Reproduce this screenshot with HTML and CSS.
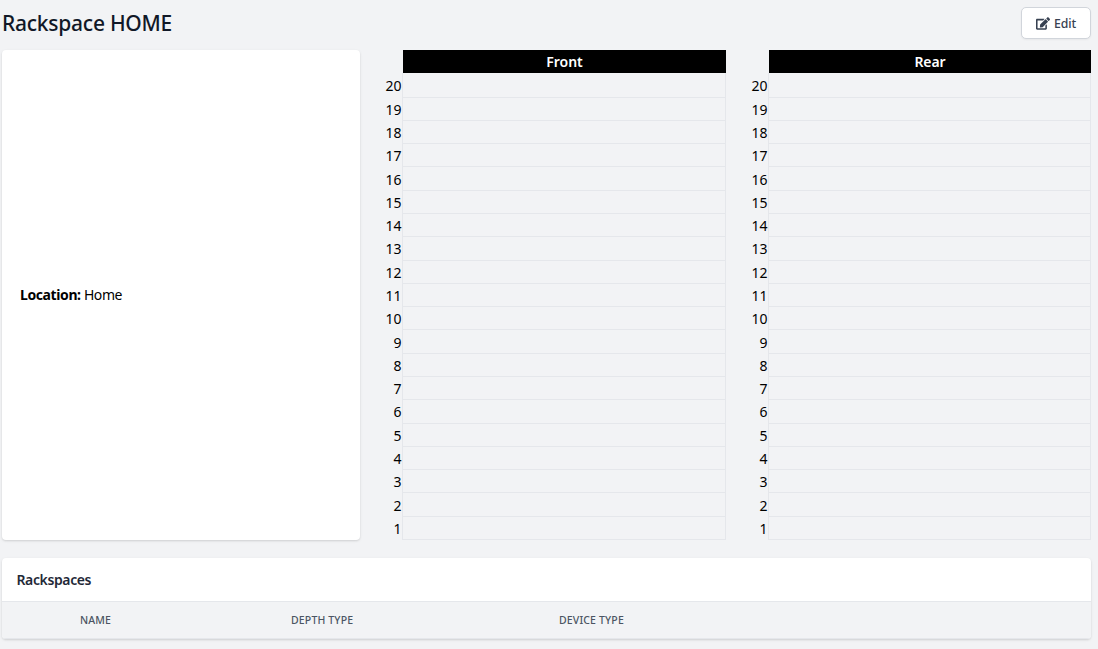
FILE: index.html
```
<!DOCTYPE html>
<html lang="en">
<head>
<meta charset="utf-8">
<title>Rackspace HOME</title>
<link rel="stylesheet" href="styles.css">
</head>
<body>
<header class="page-header">
  <h1 class="title">Rackspace HOME</h1>
  <button class="edit" type="button">
    <svg class="edit-icon" viewBox="0 0 576 512" aria-hidden="true"><path fill="currentColor" d="M402.6 83.2l90.2 90.2c3.800 3.800 3.800 10 0 13.800L274.400 405.600l-92.800 10.300c-12.400 1.400-22.900-9.100-21.500-21.500l10.300-92.800L388.800 83.200c3.800-3.800 10-3.800 13.800 0zm162-22.900l-48.800-48.800c-15.200-15.200-39.900-15.200-55.200 0l-35.400 35.400c-3.800 3.800-3.800 10 0 13.800l90.2 90.2c3.800 3.800 10 3.800 13.800 0l35.400-35.400c15.200-15.300 15.200-40 0-55.200zM384 346.200V448H64V128h229.800c3.200 0 6.200-1.300 8.500-3.500l40-40c7.600-7.600 2.200-20.500-8.500-20.500H48C21.500 64 0 85.500 0 112v352c0 26.500 21.500 48 48 48h352c26.500 0 48-21.500 48-48V306.200c0-10.700-12.900-16-20.500-8.500l-40 40c-2.200 2.300-3.500 5.300-3.500 8.500z"/></svg>
    <span>Edit</span>
  </button>
</header>
<main>
  <div class="overview">
    <section class="card info"><p><strong>Location:</strong> Home</p></section>
    <section class="rack front"><h2>Front</h2><ol class="units" reversed></ol></section>
    <section class="rack rear"><h2>Rear</h2><ol class="units" reversed></ol></section>
  </div>
  <section class="card listing">
    <h3>Rackspaces</h3>
    <div class="columns"><span>NAME</span><span>DEPTH TYPE</span><span>DEVICE TYPE</span></div>
  </section>
</main>
<script src="rack.js"></script>
</body>
</html>
```
FILE: styles.css
```
* { box-sizing: border-box; margin: 0; padding: 0; }
body {
  width: 1098px;
  height: 649px;
  overflow: hidden;
  padding: 7px 7px 0 2px;
  background: #f2f3f5;
  color: #000;
  font: 14px/21px "Noto Sans", sans-serif;
}
.page-header { display: flex; justify-content: space-between; height: 43px; }
.title { color: #111827; font-size: 21px; line-height: 33px; font-weight: 500; letter-spacing: -.25px; }
.edit {
  display: flex; align-items: center; gap: 4px;
  width: 70px; height: 32px; padding: 1px 0 0 14px;
  border: 1px solid #d1d5db; border-radius: 5px;
  background: #fff; color: #374151;
  box-shadow: 0 1px 2px rgba(0, 0, 0, .05);
  font: 500 12.250px/18px "Noto Sans", sans-serif;
  letter-spacing: -.1px;
}
.edit-icon { width: 14px; height: 13px; }
.overview { display: grid; grid-template-columns: 358px 366px 365px; height: 490px; }
.card {
  background: #fff; border-radius: 4px;
  box-shadow: 0 1px 3px rgba(0, 0, 0, .1), 0 1px 2px rgba(0, 0, 0, .06);
}
.info { display: flex; align-items: center; padding: 0 0 2px 18px; letter-spacing: -.4px; }
.rack { display: flex; flex-direction: column; }
.rack h2 {
  margin-left: 43px; height: 23px;
  background: #000; color: #fff;
  text-align: center; font-size: 14px; line-height: 23px; font-weight: 600;
}
.rear h2 { letter-spacing: -.1px; }
.units { list-style: none; flex: 1; display: grid; grid-template-rows: 24.6px repeat(19, 23.285px); }
.units li { display: grid; grid-template-columns: 42px 1fr; text-align: right; }
.units b { font-weight: 400; align-self: center; padding-right: .5px; }
.units i { border: solid #e5e7eb; border-width: 0 1px 1px; }
.listing { margin-top: 18px; height: 81px; overflow: hidden; }
.listing h3 { height: 43px; padding-left: 14.500px; font-size: 14px; line-height: 43px; font-weight: 600; color: #1f2937; letter-spacing: -.38px; }
.columns {
  display: grid; grid-template-columns: 211px 268px 1fr;
  height: 38px; padding-left: 78px;
  border: solid #e5e7eb; border-width: 1px 0;
  background: #f2f3f5; color: #4b5563;
  font-size: 10.500px; line-height: 36px; font-weight: 500; letter-spacing: .15px;
}
```
FILE: rack.js
```
document.querySelectorAll(".units").forEach((list) => {
  for (let unit = 20; unit > 0; unit--) {
    const row = document.createElement("li");
    row.innerHTML = `<b>${unit}</b><i></i>`;
    list.append(row);
  }
});
```
